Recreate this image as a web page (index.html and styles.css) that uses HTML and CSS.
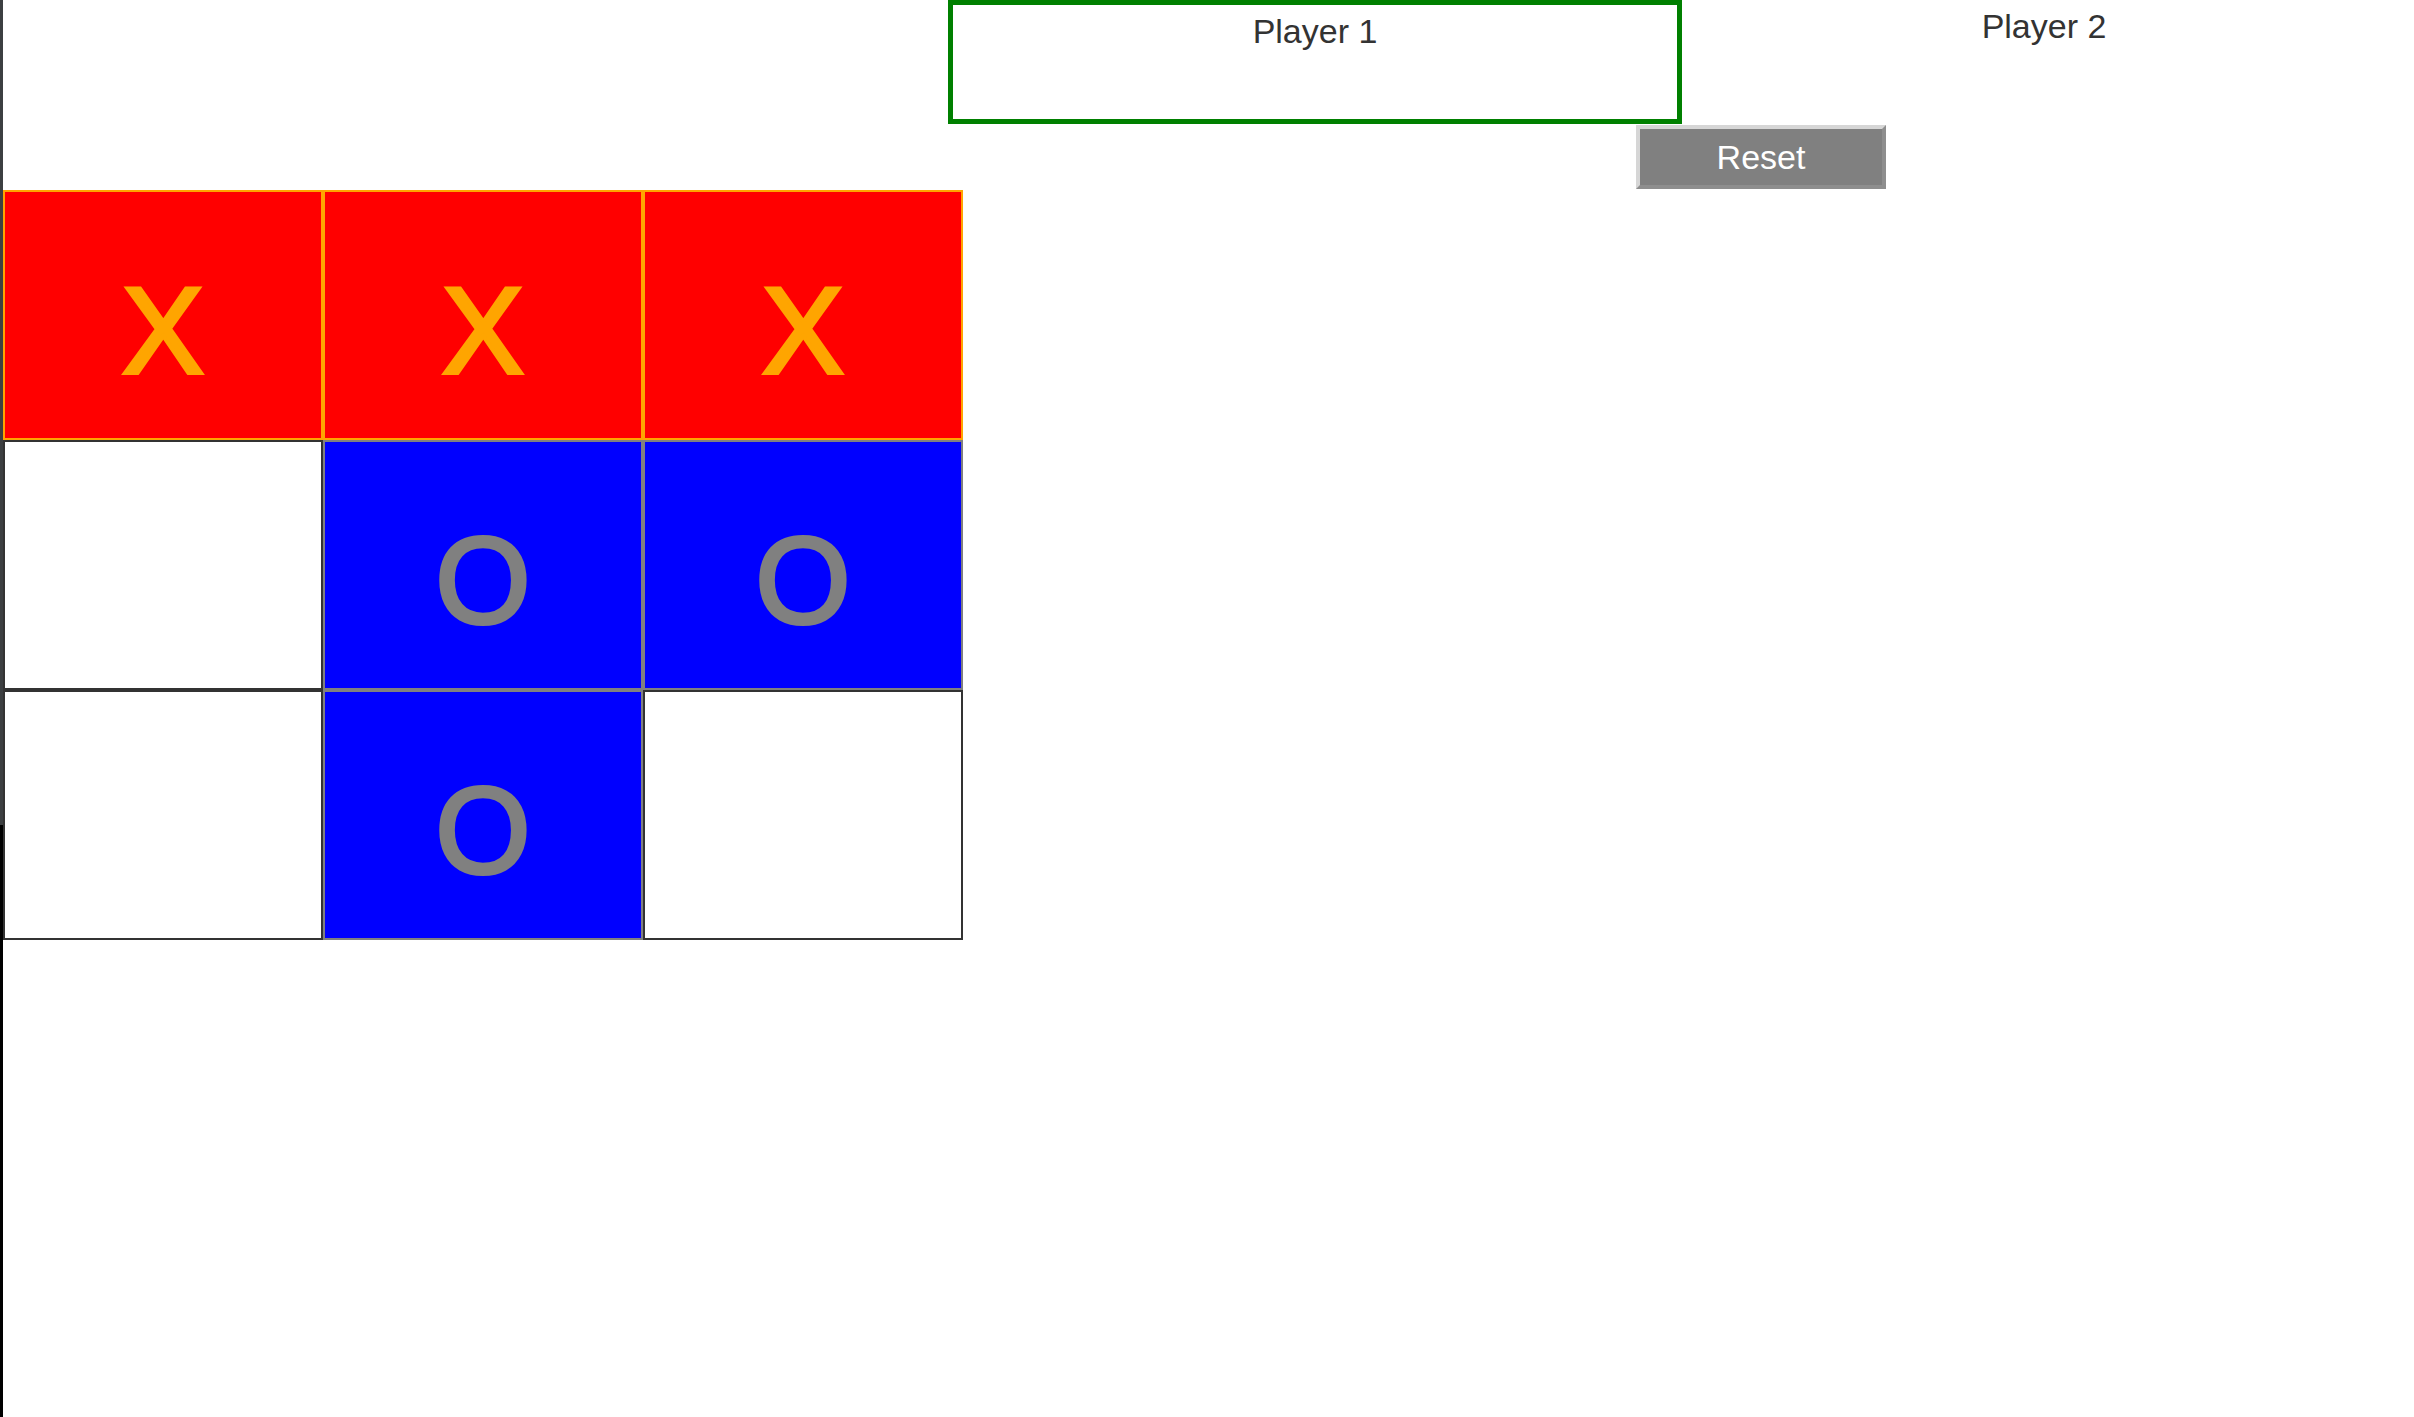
FILE: index.html
```html
<!DOCTYPE html>
<html>
<head>
<meta charset="utf-8">
<title>Tic Tac Toe</title>
<link rel="stylesheet" href="styles.css">
</head>
<body>
<div class="page">
  <div class="edge"><div class="edge-top"></div><div class="edge-bottom"></div></div>
  <main class="app">
    <div class="players">
      <div class="player active">Player 1</div>
      <div class="player">Player 2</div>
    </div>
    <div class="controls">
      <button class="reset">Reset</button>
    </div>
    <div class="board">
      <div class="cell x">X</div>
      <div class="cell x">X</div>
      <div class="cell x">X</div>
      <div class="cell"></div>
      <div class="cell o">O</div>
      <div class="cell o">O</div>
      <div class="cell"></div>
      <div class="cell o">O</div>
      <div class="cell"></div>
    </div>
  </main>
</div>
</body>
</html>
```

FILE: styles.css
```css
html, body {
  margin: 0;
  padding: 0;
  background: #ffffff;
  font-family: "Liberation Sans", Arial, sans-serif;
}

.page {
  display: flex;
  min-height: 1417px;
}

.edge {
  width: 3px;
  display: flex;
  flex-direction: column;
  flex-shrink: 0;
}

.edge-top {
  height: 825px;
  background: #3c3f41;
}

.edge-bottom {
  flex: 1;
  background: #000000;
}

.app {
  flex: 1;
  display: flex;
  flex-direction: column;
}

.players {
  display: flex;
  margin-left: 945px;
  height: 124px;
}

.player {
  width: 724px;
  height: 124px;
  padding-top: 7px;
  box-sizing: border-box;
  text-align: center;
  font-size: 34px;
  color: #333333;
}

.player.active {
  width: 734px;
  border: 5px solid #008000;
}

.controls {
  display: flex;
  margin-left: 1633px;
  margin-top: 1px;
}

.reset {
  width: 250px;
  height: 64px;
  box-sizing: border-box;
  background: #808080;
  color: #ffffff;
  font-family: "Liberation Sans", Arial, sans-serif;
  font-size: 34px;
  border-style: solid;
  border-width: 4px;
  border-color: #d6d6d6 #8e8e8e #8e8e8e #d6d6d6;
  padding: 0;
  margin: 0;
}

.board {
  display: grid;
  grid-template-columns: repeat(3, 320px);
  grid-template-rows: repeat(3, 250px);
  width: 960px;
  margin-top: 1px;
}

.cell {
  box-sizing: border-box;
  border: 2px solid #333333;
  background: #ffffff;
  display: flex;
  align-items: center;
  justify-content: center;
  padding-top: 31px;
  font-size: 122px;
  line-height: normal;
}

.cell.x {
  background: #ff0000;
  border-color: #ffa500;
  color: #ffa500;
  -webkit-text-stroke: 4px #ffa500;
}

.cell.o {
  background: #0000ff;
  border-color: #808080;
  color: #808080;
  -webkit-text-stroke: 4px #808080;
}
```
